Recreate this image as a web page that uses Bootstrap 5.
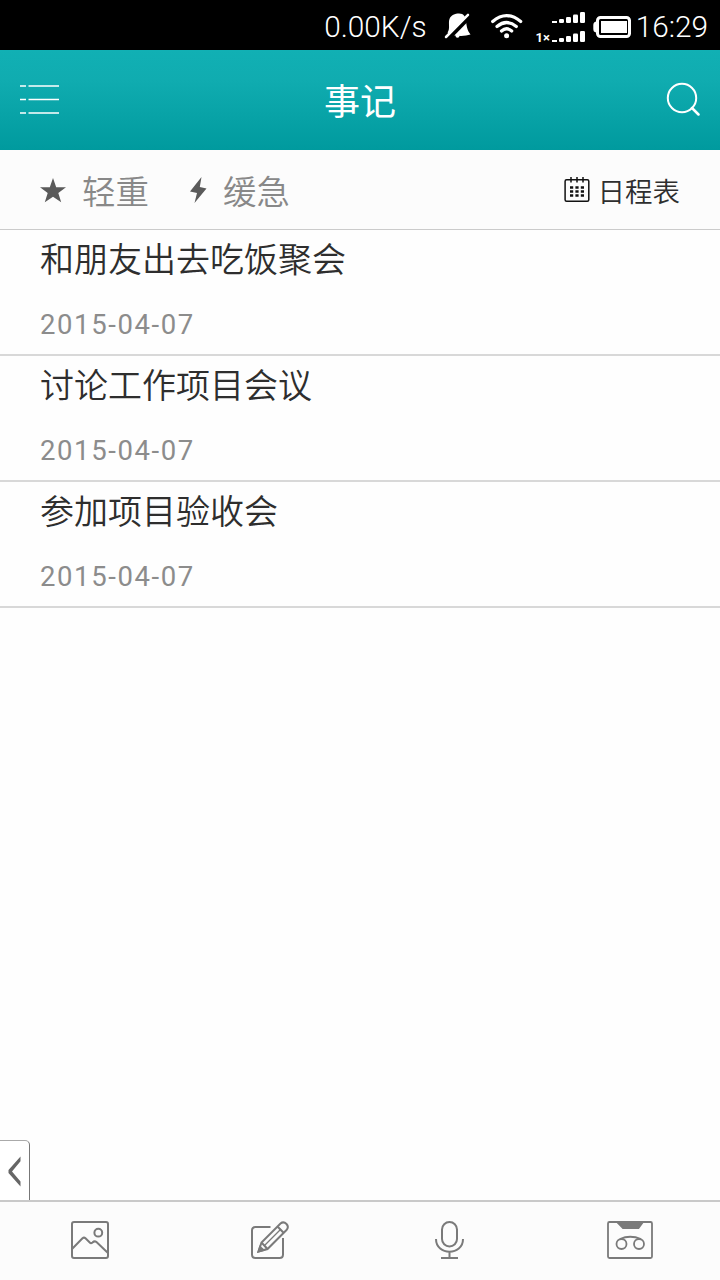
<!DOCTYPE html>
<html lang="zh-CN">
<head>
<meta charset="utf-8">
<meta name="viewport" content="width=device-width, initial-scale=1">
<title>事记</title>
<link href="https://cdn.jsdelivr.net/npm/bootstrap@5.3.0/dist/css/bootstrap.min.css" rel="stylesheet">
<style>
body{font-family:Roboto,"Noto Sans CJK SC",sans-serif;color:#2e2e2e;background:#fefefe;line-height:1}
svg{display:block;flex:none}
.phone{height:1280px}
.status-bar{height:50px;background:#000;color:#fff;font-size:29.8px;font-weight:300;padding-right:12px}
.status-bar span{line-height:50px;padding-top:2px}
.status-bar .net-speed{margin-right:1px}
.title-bar{height:100px;background:linear-gradient(#11b0b4 0,#10acb0 30%,#009a9e 100%);color:#fff;padding:0 20px}
.title-bar h1{font-size:36px;line-height:50px;font-weight:400;padding-top:6px}
.filter-bar{height:80px;background:#fcfcfc;border-bottom:1px solid #cbcbcb;padding:0 40px}
.filter-label{font-size:33.5px;line-height:50px;color:#888;font-weight:350;padding-top:7px}
.schedule-label{font-size:27.5px;line-height:40px;font-weight:350;padding-top:7px}
.entry{height:126px;border-bottom:2px solid #d8d8d8!important;padding:5px 40px 0;background:transparent;border-radius:0!important}
.entry h2{font-size:34px;line-height:50px;color:#2e2e2e;font-weight:350}
.entry time{font-size:27.5px;line-height:34px;letter-spacing:1.6px;color:#8c8c8c;font-weight:400;margin-top:23px}
.drawer-handle{width:30px;height:60px;border:1px solid #777;border-top-color:#aaa;border-left:0;border-bottom:0;border-radius:0 5px 0 0;background:#fff}
.tool-bar{height:80px;background:#fcfcfc;border-top:2px solid #c9c9c9;padding-bottom:2px}
</style>
</head>
<body>
<div class="phone d-flex flex-column overflow-hidden">
  <div class="status-bar d-flex justify-content-end flex-shrink-0">
    <span class="net-speed">0.00K/s</span>
    <svg width="208" height="50" viewBox="428 0 208 50" fill="#fff">
      <path d="M447.500 32.500C450.500 29 448 23 449.500 19C451 15 455 13.500 459 13.500C464 13.500 465.500 17 466 20C466.500 26 467 30 470.500 34.500Q463 37 452 35Z"/>
      <path d="M447.500 39.500L471 15.500" stroke="#000" stroke-width="4"/>
      <path d="M446 37L468 14.800" stroke="#fff" stroke-width="2.500" stroke-linecap="round"/>
      <circle cx="457.500" cy="35.700" r="2"/>
      <g fill="none" stroke="#fff" stroke-width="3.200" stroke-linecap="round"><path d="M492.700 21.500Q506.500 9.700 520.700 21.500"/><path d="M497 26.500Q506.500 18.500 516.300 26.500"/><path d="M501.500 31Q506.500 26.500 511.700 31"/></g>
      <circle cx="506.600" cy="35.700" r="2.500"/>
      <g id="bars"><rect x="552" y="21" width="5" height="2"/><rect x="559" y="19" width="5" height="4" rx="1.300"/><rect x="566" y="17" width="5" height="6" rx="1.300"/><rect x="573" y="14.500" width="5" height="8.500" rx="1.300"/><rect x="580" y="12" width="5" height="11" rx="1.300"/></g>
      <use href="#bars" y="19"/>
      <text x="535.500" y="41.500" font-size="13" font-weight="700" font-family="Roboto,sans-serif">1×</text>
      <rect x="597.500" y="17.500" width="32" height="19" rx="3" fill="none" stroke="#fff" stroke-width="3"/>
      <rect x="601" y="21" width="26" height="12"/><path d="M596 21.500Q593.300 22 593.300 25V29Q593.300 32 596 32.500Z"/>
    </svg>
    <span>16:29</span>
  </div>
  <header class="title-bar d-flex align-items-center justify-content-between flex-shrink-0">
    <svg width="40" height="40" viewBox="0 0 40 40" stroke="#fff" stroke-width="1.700"><path d="M0 6H6M8.500 6H39M0 19.500H6M8.500 19.500H39M0 33H6M8.500 33H39"/></svg>
    <h1 class="m-0">事记</h1>
    <svg width="40" height="40" viewBox="660 80 40 40" fill="none" stroke="#fff" stroke-width="2"><circle cx="682" cy="98" r="14.200"/><path d="M692 108L698.500 114.500" stroke-width="2.500" stroke-linecap="round"/></svg>
  </header>
  <div class="filter-bar d-flex align-items-center flex-shrink-0">
    <svg width="42" height="40" viewBox="40 170 42 40" fill="#5a5a5a"><path d="M53 178L56.200 187.200H66L58.300 193L61.200 202.300L53 196.700L44.800 202.300L47.700 193L40 187.200H49.800Z"/></svg>
    <span class="filter-label">轻重</span>
    <svg width="74" height="40" viewBox="149 170 74 40" fill="#5a5a5a"><path d="M201.500 177L190 191.500L197 193L194.500 203L206.500 188.500L199.800 187Z"/></svg>
    <span class="filter-label">缓急</span>
    <div class="ms-auto d-flex align-items-center">
      <svg width="34" height="40" viewBox="563.500 170 34 40" fill="none" stroke="#111"><rect x="564.600" y="179.700" width="23.700" height="21.600" rx="1.500" stroke-width="1.500"/><path d="M570.500 177V182.500M576.500 177V182.500M582.500 177V182.500" stroke-width="1.500"/><path d="M569.500 187.500H583.500M569.500 191.500H583.500M569.500 195.500H583.500" stroke-width="2.600" stroke-dasharray="3.200 2.200"/></svg>
      <span class="schedule-label">日程表</span>
    </div>
  </div>
  <main class="list-group list-group-flush flex-grow-1">
    <article class="list-group-item entry"><h2 class="m-0">和朋友出去吃饭聚会</h2><time class="d-block">2015-04-07</time></article>
    <article class="list-group-item entry"><h2 class="m-0">讨论工作项目会议</h2><time class="d-block">2015-04-07</time></article>
    <article class="list-group-item entry"><h2 class="m-0">参加项目验收会</h2><time class="d-block">2015-04-07</time></article>
  </main>
  <div class="drawer-handle flex-shrink-0"><svg width="29" height="59" viewBox="0 1141 29 59" fill="#666"><path d="M20.500 1156.500V1161.200L12 1171.500L20.500 1181.500V1186.500L8.500 1173V1170Z"/></svg></div>
  <footer class="tool-bar row g-0 align-items-center flex-shrink-0">
    <div class="col-3 d-flex justify-content-center"><svg width="50" height="50" viewBox="65 1215 50 50" fill="none" stroke="#7a7a7a" stroke-width="2"><rect x="72" y="1222" width="36" height="36" rx="2"/><circle cx="98.300" cy="1232.700" r="3.900"/><path d="M72 1249L82.500 1238.300Q84 1237 85.500 1238.300L90 1242.800Q91 1243.800 92.500 1242.500Q94.500 1240.500 96.500 1242L108 1253"/></svg></div>
    <div class="col-3 d-flex justify-content-center"><svg width="50" height="50" viewBox="245 1215 50 50" fill="none" stroke="#7a7a7a" stroke-width="2"><path d="M270.500 1227H255.500Q252 1227 252 1230.500V1254.500Q252 1258 255.500 1258H279.500Q283 1258 283 1254.500V1238"/><path d="M258.500 1251.500L261.500 1242.500L280.500 1223.500Q283.500 1221 286.500 1224Q289.200 1227 286.500 1230L267.500 1249ZM261.500 1242.500L267.500 1249M277.500 1226.500L283.800 1233"/><path d="M264.500 1245.500L281 1229" stroke-width="1.200"/><path d="M258.500 1251.500L260 1247L263.500 1250Z" fill="#7a7a7a"/></svg></div>
    <div class="col-3 d-flex justify-content-center"><svg width="50" height="50" viewBox="425 1215 50 50" fill="none" stroke="#7a7a7a" stroke-width="2"><rect x="442" y="1222" width="15" height="24.500" rx="7.500"/><path d="M436 1239C436 1256 463 1256 463 1239M449.500 1252V1258M441 1258H458"/></svg></div>
    <div class="col-3 d-flex justify-content-center"><svg width="50" height="50" viewBox="605 1215 50 50" fill="none" stroke="#7a7a7a" stroke-width="1.800"><rect x="608" y="1222" width="44" height="36" rx="1.500"/><path d="M617 1222H643L638.500 1228H623Z" fill="#7a7a7a"/><circle cx="621.500" cy="1244" r="5"/><circle cx="639" cy="1244" r="5"/><path d="M620 1239Q630 1234.500 641 1239"/></svg></div>
  </footer>
</div>
<script src="https://cdn.jsdelivr.net/npm/bootstrap@5.3.0/dist/js/bootstrap.bundle.min.js"></script>
</body>
</html>
